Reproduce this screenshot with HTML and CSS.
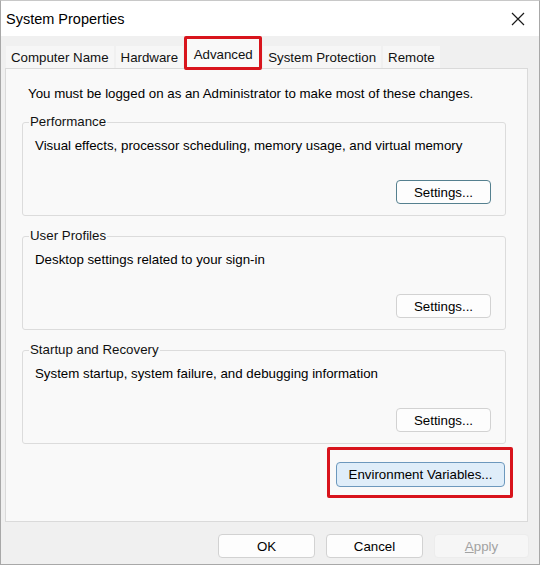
FILE: index.html
```html
<!DOCTYPE html>
<html>
<head>
<meta charset="utf-8">
<link rel="stylesheet" href="styles.css">
</head>
<body>
<div class="window">
  <div class="titlebar">
    <span class="title">System Properties</span>
    <svg class="close" width="14" height="14" viewBox="0 0 14 14"><path d="M1 1 L13 13 M13 1 L1 13" stroke="#1a1a1a" stroke-width="1.2" fill="none"/></svg>
  </div>
  <div class="body">
    <div class="tabs">
      <div class="tab">Computer Name</div>
      <div class="tab">Hardware</div>
      <div class="tab active">Advanced</div>
      <div class="tab">System Protection</div>
      <div class="tab">Remote</div>
    </div>
    <div class="panel">
      <p class="note">You must be logged on as an Administrator to make most of these changes.</p>
      <fieldset class="group">
        <legend>Performance</legend>
        <p class="desc">Visual effects, processor scheduling, memory usage, and virtual memory</p>
        <div class="btnrow"><button class="btn focused">Settings...</button></div>
      </fieldset>
      <fieldset class="group">
        <legend>User Profiles</legend>
        <p class="desc">Desktop settings related to your sign-in</p>
        <div class="btnrow"><button class="btn">Settings...</button></div>
      </fieldset>
      <fieldset class="group">
        <legend>Startup and Recovery</legend>
        <p class="desc">System startup, system failure, and debugging information</p>
        <div class="btnrow"><button class="btn">Settings...</button></div>
      </fieldset>
      <div class="envrow">
        <div class="highlight"><button class="btn env">Environment Variables...</button></div>
      </div>
    </div>
    <div class="footer">
      <button class="btn foot">OK</button>
      <button class="btn foot">Cancel</button>
      <button class="btn foot disabled"><u>A</u>pply</button>
    </div>
  </div>
</div>
</body>
</html>
```

FILE: styles.css
```css
* { box-sizing: border-box; }
html, body { margin: 0; padding: 0; }
body {
  font-family: "Liberation Sans", Arial, sans-serif;
  font-size: 13.3px;
  color: #000;
  background: #fff;
}
.window {
  width: 540px;
  height: 565px;
  border: 1px solid #a8a8a8;
  border-top-color: #c8c8c8;
  display: flex;
  flex-direction: column;
  background: #f0f0f0;
}
.titlebar {
  height: 35px;
  background: #fff;
  display: flex;
  align-items: center;
  justify-content: space-between;
  padding: 0 14px 0 5px;
  flex: none;
}
.title {
  font-size: 14.5px;
  color: #000;
  padding-top: 1px;
}
.close { display: block; }
.body {
  flex: 1;
  display: flex;
  flex-direction: column;
  padding: 0 11px 0 4px;
}
.tabs {
  display: flex;
  align-items: flex-end;
  gap: 2px;
  padding-left: 1px;
  height: 32px;
}
.tab {
  height: 22px;
  line-height: 23px;
  padding: 0 5px;
  background: #f6f6f6;
  color: #111;
}
.tab.active {
  position: relative;
  z-index: 1;
  width: 78px;
  height: 34px;
  margin-bottom: -2px;
  line-height: 28px;
  padding: 2px 0 0 0;
  text-align: center;
  border: 3px solid #d8141c;
  border-radius: 2px;
  background: #f9f9f9;
  margin-left: -1px;
  margin-right: -1px;
}
.panel {
  height: 454px;
  background: #f9f9f9;
  border: 1px solid #dadada;
  padding: 0 21px 0 16px;
  display: flex;
  flex-direction: column;
}
.note {
  margin: 17px 0 12px 6px;
  line-height: 16px;
}
.group {
  margin: 0 0 12px 0;
  padding: 8px 14px 11px 6px;
  border: 1px solid #dcdcdc;
  border-radius: 3px;
  min-width: 0;
}
.group legend {
  padding: 0 1px;
  line-height: 16px;
  color: #111;
}
.desc {
  margin: 0 0 26px 6px;
  line-height: 16px;
}
.btnrow {
  display: flex;
  justify-content: flex-end;
}
.btn {
  font-family: "Liberation Sans", Arial, sans-serif;
  font-size: 13.3px;
  color: #000;
  height: 24px;
  background: #fdfdfd;
  border: 1px solid #d2d2d2;
  border-radius: 4px;
  padding: 0;
}
.btnrow .btn { width: 95px; }
.btn.focused { border-color: #55808f; }
.envrow {
  display: flex;
  justify-content: flex-end;
  margin-top: -9px;
  margin-right: -7px;
}
.highlight {
  border: 3px solid #d8141c;
  border-radius: 2px;
  padding: 12px 5px 8px 6px;
}
.btn.env {
  width: 169px;
  height: 25px;
  background: #dfedf9;
  border-color: #6c98bd;
}
.footer {
  display: flex;
  justify-content: flex-end;
  gap: 11px;
  padding-top: 12px;
  margin-right: -1px;
}
.btn.foot { width: 97px; }
.btn.disabled {
  width: 95px;
  background: #f6f6f6;
  border-color: #ececec;
  color: #a2a2a2;
}
.btn.disabled u { text-decoration-thickness: 1px; }
```
